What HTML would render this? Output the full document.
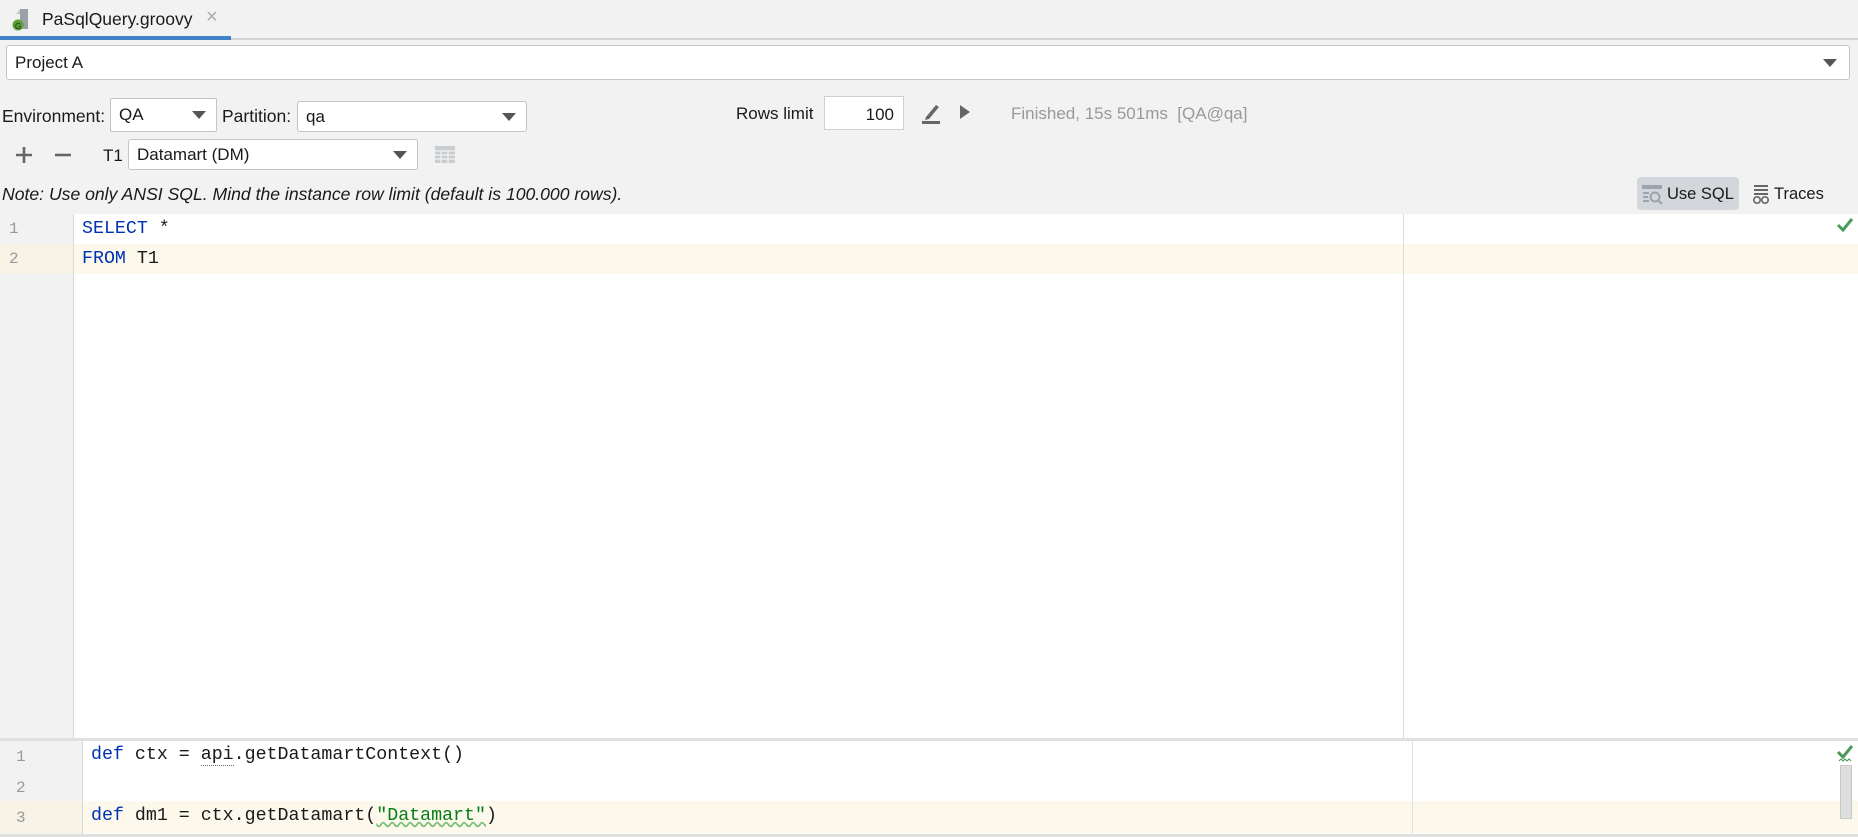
<!DOCTYPE html>
<html><head><meta charset="utf-8"><style>
*{box-sizing:border-box;margin:0;padding:0}
body{width:1858px;height:837px;background:#f2f2f2;font-family:"Liberation Sans",sans-serif;font-size:17px;color:#1a1a1a;position:relative;overflow:hidden}
.a{position:absolute}
.combo{position:absolute;background:#fff;border:1px solid #c4c4c4;border-radius:3px}
.combo span{position:absolute;left:8px;top:50%;transform:translateY(-50%)}
.arr{position:absolute;right:10px;top:50%;margin-top:-4px;width:0;height:0;border-left:7px solid transparent;border-right:7px solid transparent;border-top:8px solid #555}
.mono{font-family:"Liberation Mono",monospace;font-size:18.3px}
.kw{color:#0033b3}
.ln{color:#999;font-family:"Liberation Mono",monospace;font-size:16px}
</style></head><body>
<div class="a" style="left:0;top:0;width:1858px;height:40px;background:#f2f2f2;border-bottom:2px solid #d4d4d4"></div>
<div class="a" style="left:0;top:36px;width:231px;height:4px;background:#4083c9"></div>
<svg class="a" style="left:12px;top:8px" width="22" height="24"><path d="M8 1h8v20H8z" fill="#9aa0a6"/><path d="M8 1l-4 5h4z" fill="#c8c8c8"/><circle cx="6" cy="17" r="5.5" fill="#5aa134"/><text x="3" y="21" font-size="8" fill="#222" font-family="Liberation Sans">G</text></svg>
<div class="a" style="left:42px;top:9px;font-size:17.5px">PaSqlQuery.groovy</div>
<div class="a" style="left:206px;top:6px;font-size:20px;color:#aaa">×</div>
<div class="combo" style="left:6px;top:45px;width:1844px;height:35px"><span>Project A</span><div class="arr" style="right:12px"></div></div>
<div class="a" style="left:2px;top:106px;font-size:17.5px">Environment:</div>
<div class="combo" style="left:110px;top:98px;width:107px;height:34px;border-radius:2px"><span>QA</span><div class="arr"></div></div>
<div class="a" style="left:222px;top:106px;font-size:17.5px">Partition:</div>
<div class="combo" style="left:297px;top:101px;width:230px;height:31px"><span>qa</span><div class="arr"></div></div>
<div class="a" style="left:736px;top:104px">Rows limit</div>
<div class="a" style="left:824px;top:96px;width:80px;height:34px;background:#fff;border:1px solid #d0d0d0;text-align:right;padding:8px 9px 0 0">100</div>
<svg class="a" style="left:920px;top:101px" width="22" height="24"><path d="M6 16l10-12 3 2-10 12-4 1z" fill="#666"/><rect x="2" y="20" width="18" height="3" fill="#666"/></svg>
<svg class="a" style="left:958px;top:104px" width="14" height="16"><path d="M2 1l10 7-10 7z" fill="#666"/></svg>
<div class="a" style="left:1011px;top:104px;color:#999">Finished, 15s 501ms&nbsp; [QA@qa]</div>
<svg class="a" style="left:14px;top:145px" width="20" height="20"><path d="M10 2v16M2 10h16" stroke="#666" stroke-width="2.6"/></svg>
<svg class="a" style="left:53px;top:145px" width="20" height="20"><path d="M2 10h16" stroke="#666" stroke-width="2.6"/></svg>
<div class="a" style="left:103px;top:146px">T1</div>
<div class="combo" style="left:128px;top:139px;width:290px;height:31px"><span>Datamart (DM)</span><div class="arr"></div></div>
<svg class="a" style="left:434px;top:145px" width="22" height="20"><rect x="1" y="1" width="20" height="17" fill="#c8cdd2"/><path d="M1 6h20M1 10h20M1 14h20M7 6v12M14 6v12" stroke="#f2f2f2" stroke-width="1.2"/></svg>
<div class="a" style="left:2px;top:184px;font-style:italic;font-size:17.6px">Note: Use only ANSI SQL. Mind the instance row limit (default is 100.000 rows).</div>
<div class="a" style="left:1637px;top:177px;width:102px;height:33px;background:#d3d6da;border-radius:4px"></div>
<svg class="a" style="left:1641px;top:183px" width="24" height="22"><rect x="1" y="2" width="20" height="4" fill="#9aa4ae"/><path d="M2 10h6M2 14h5M2 18h6" stroke="#9aa4ae" stroke-width="2"/><circle cx="14" cy="14" r="4.5" fill="none" stroke="#9aa4ae" stroke-width="2"/><path d="M17 17l4 4" stroke="#9aa4ae" stroke-width="2"/></svg>
<div class="a" style="left:1667px;top:185px;font-size:16.5px">Use SQL</div>
<svg class="a" style="left:1752px;top:183px" width="20" height="22"><path d="M2 3h14M2 7h14M2 11h14" stroke="#666" stroke-width="2"/><circle cx="5" cy="17" r="3.2" fill="none" stroke="#666" stroke-width="1.6"/><circle cx="13" cy="17" r="3.2" fill="none" stroke="#666" stroke-width="1.6"/></svg>
<div class="a" style="left:1774px;top:185px;font-size:16.5px">Traces</div>
<div class="a" style="left:0;top:214px;width:1858px;height:524px;background:#fff;border-left:1px solid #ddd"></div>
<div class="a" style="left:0;top:214px;width:74px;height:524px;background:#f2f2f2;border-right:1px solid #d8d8d8"></div>
<div class="a" style="left:0;top:244px;width:1858px;height:30px;background:#fcf9ec"></div>
<div class="a" style="left:0;top:244px;width:74px;height:30px;background:#f7f3e6;border-right:1px solid #d8d8d8"></div>
<div class="a" style="left:1403px;top:214px;width:1px;height:524px;background:#dcdcdc"></div>
<div class="ln a" style="left:9px;top:220px">1</div>
<div class="ln a" style="left:9px;top:250px">2</div>
<div class="mono a" style="left:82px;top:219px"><span class="kw">SELECT</span> *</div>
<div class="mono a" style="left:82px;top:249px"><span class="kw">FROM</span> T1</div>
<svg class="a" style="left:1836px;top:217px" width="18" height="16"><path d="M2 8l5 5 9-11" fill="none" stroke="#4a9a5c" stroke-width="3"/></svg>
<div class="a" style="left:0;top:738px;width:1858px;height:3px;background:#e0e0e0"></div>
<div class="a" style="left:0;top:741px;width:1858px;height:93px;background:#fff"></div>
<div class="a" style="left:0;top:741px;width:83px;height:93px;background:#f2f2f2;border-right:1px solid #d8d8d8"></div>
<div class="a" style="left:0;top:801px;width:1858px;height:32px;background:#fcf9ec"></div>
<div class="a" style="left:0;top:801px;width:83px;height:32px;background:#f7f3e6;border-right:1px solid #d8d8d8"></div>
<div class="a" style="left:1412px;top:741px;width:1px;height:93px;background:#e0e0e0"></div>
<div class="a" style="left:1840px;top:765px;width:12px;height:54px;background:#dedede;border:1px solid #c8c8c8"></div>
<div class="a" style="left:0;top:834px;width:1858px;height:3px;background:#e0e0e0"></div>
<div class="ln a" style="left:16px;top:748px">1</div>
<div class="ln a" style="left:16px;top:779px">2</div>
<div class="ln a" style="left:16px;top:809px">3</div>
<div class="mono a" style="left:91px;top:745px"><span class="kw">def</span> ctx = <span style="border-bottom:1px dotted #666">api</span>.getDatamartContext()</div>
<div class="mono a" style="left:91px;top:806px"><span class="kw">def</span> dm1 = ctx.getDatamart(<span style="color:#067d17;text-decoration:underline wavy #7cbf7c">"Datamart"</span>)</div>
<svg class="a" style="left:1836px;top:745px" width="18" height="18"><path d="M2 7l5 5 9-11" fill="none" stroke="#4a9a5c" stroke-width="3"/><path d="M3 16l2-2 2 2 2-2 2 2 2-2 2 2" fill="none" stroke="#4a9a5c" stroke-width="1"/></svg>
</body></html>
